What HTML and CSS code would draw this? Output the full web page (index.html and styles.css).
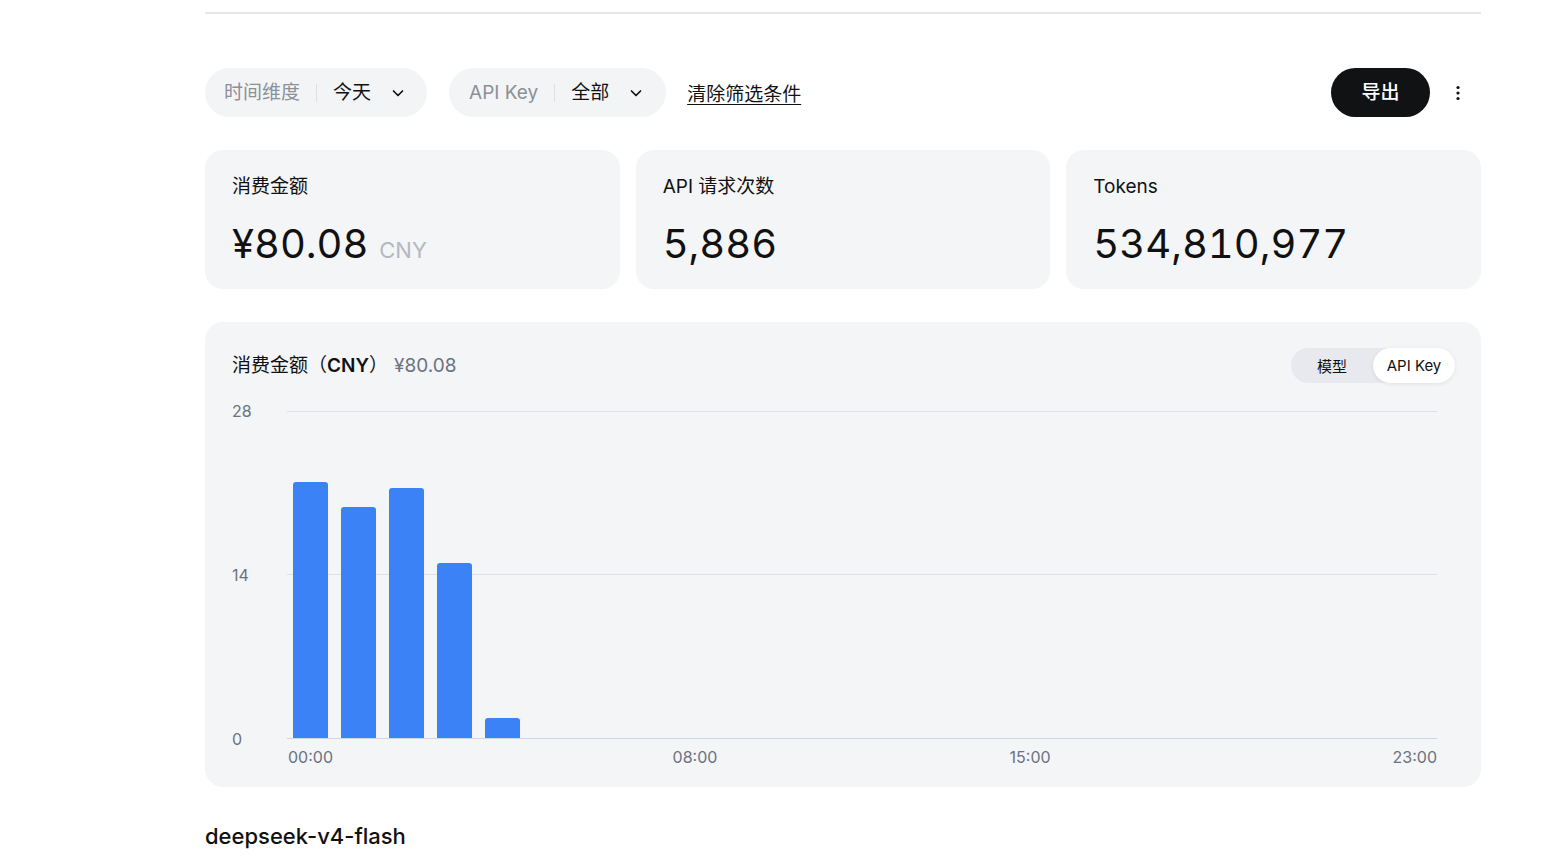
FILE: index.html
```html
<!DOCTYPE html>
<html lang="zh-CN">
<head>
  <meta charset="UTF-8" />
  <meta name="viewport" content="width=device-width, initial-scale=1.0"/>
  <title>用量信息</title>
  <link rel="stylesheet" href="styles.css">
</head>
<body>
  <div class="page">
    <div class="topline"></div>

    <div class="filters">
      <div class="filter-left">
        <div class="pill">
          <span class="pill-label">时间维度</span>
          <span class="pill-sep"></span>
          <span class="pill-value">今天</span>
          <svg class="chevron" width="14" height="14" viewBox="0 0 14 14"><path d="M2.5 5l4.5 4.5L11.5 5" fill="none" stroke="#111" stroke-width="1.7" stroke-linecap="round" stroke-linejoin="round"/></svg>
        </div>
        <div class="pill">
          <span class="pill-label">API Key</span>
          <span class="pill-sep"></span>
          <span class="pill-value">全部</span>
          <svg class="chevron" width="14" height="14" viewBox="0 0 14 14"><path d="M2.5 5l4.5 4.5L11.5 5" fill="none" stroke="#111" stroke-width="1.7" stroke-linecap="round" stroke-linejoin="round"/></svg>
        </div>
        <a class="clear-link" href="#">清除筛选条件</a>
      </div>
      <div class="filter-right">
        <button class="export-btn">导出</button>
        <button class="more-btn">
          <svg width="4" height="16" viewBox="0 0 4 16"><circle cx="2" cy="2.5" r="1.6" fill="#111"/><circle cx="2" cy="8" r="1.6" fill="#111"/><circle cx="2" cy="13.5" r="1.6" fill="#111"/></svg>
        </button>
      </div>
    </div>

    <div class="stats">
      <div class="stat-card">
        <div class="stat-label">消费金额</div>
        <div class="stat-value">¥80.08 <span class="stat-unit">CNY</span></div>
      </div>
      <div class="stat-card">
        <div class="stat-label">API 请求次数</div>
        <div class="stat-value">5,886</div>
      </div>
      <div class="stat-card">
        <div class="stat-label">Tokens</div>
        <div class="stat-value">534,810,977</div>
      </div>
    </div>

    <div class="chart-card">
      <div class="chart-head">
        <div class="chart-title">消费金额（<span class="chart-unit">CNY</span>）<span class="chart-total">¥80.08</span></div>
        <div class="toggle">
          <span class="toggle-item">模型</span>
          <span class="toggle-item active">API Key</span>
        </div>
      </div>

      <div class="chart-body">
        <div class="y-axis">
          <span>28</span>
          <span>14</span>
          <span>0</span>
        </div>
        <div class="plot">
          <div class="slot"><div class="bar" style="height: 78.6%"></div></div>
          <div class="slot"><div class="bar" style="height: 71.0%"></div></div>
          <div class="slot"><div class="bar" style="height: 76.8%"></div></div>
          <div class="slot"><div class="bar" style="height: 53.8%"></div></div>
          <div class="slot"><div class="bar" style="height: 6.1%"></div></div>
          <div class="slot"></div>
          <div class="slot"></div>
          <div class="slot"></div>
          <div class="slot"></div>
          <div class="slot"></div>
          <div class="slot"></div>
          <div class="slot"></div>
          <div class="slot"></div>
          <div class="slot"></div>
          <div class="slot"></div>
          <div class="slot"></div>
          <div class="slot"></div>
          <div class="slot"></div>
          <div class="slot"></div>
          <div class="slot"></div>
          <div class="slot"></div>
          <div class="slot"></div>
          <div class="slot"></div>
          <div class="slot"></div>
        </div>
        <div class="x-axis">
          <span class="tick tick-start">00:00</span>
          <span class="tick"></span><span class="tick"></span><span class="tick"></span>
          <span class="tick"></span><span class="tick"></span><span class="tick"></span>
          <span class="tick"></span>
          <span class="tick tick-mid">08:00</span>
          <span class="tick"></span><span class="tick"></span><span class="tick"></span>
          <span class="tick"></span><span class="tick"></span><span class="tick"></span>
          <span class="tick tick-mid">15:00</span>
          <span class="tick"></span><span class="tick"></span><span class="tick"></span>
          <span class="tick"></span><span class="tick"></span><span class="tick"></span>
          <span class="tick"></span>
          <span class="tick tick-end">23:00</span>
        </div>
      </div>
    </div>

    <h2 class="model-title">deepseek-v4-flash</h2>
  </div>
</body>
</html>
```

FILE: styles.css
```css
    body {
      margin: 0;
      font-family: Inter, "Noto Sans CJK SC", sans-serif;
      background-color: white;
      color: #111;
    }

    .page {
      width: 1276px;
      margin-left: 205px;
    }

    .topline {
      height: 12px;
      border-bottom: 2px solid #e6e6e6;
    }

    .filters {
      display: flex;
      justify-content: space-between;
      align-items: center;
      margin-top: 54px;
      height: 49px;
    }

    .filter-left {
      display: flex;
      align-items: center;
      gap: 22px;
    }

    .pill {
      display: flex;
      align-items: center;
      height: 49px;
      padding: 0 22px 0 19px;
      background-color: #f3f4f6;
      border-radius: 25px;
      font-size: 19px;
      line-height: 24px;
    }

    .pill + .pill {
      padding-left: 20px;
      padding-right: 23px;
    }

    .pill-label {
      color: #8b8f97;
    }

    .pill-sep {
      width: 1px;
      height: 18px;
      background-color: #dcdfe4;
      margin: 0 16px;
    }

    .pill-value {
      color: #111;
    }

    .chevron {
      margin-left: 20px;
    }

    .clear-link {
      margin-left: -1px;
      color: #111;
      font-size: 19px;
      text-decoration: underline;
      text-underline-offset: 3px;
    }

    .filter-right {
      display: flex;
      align-items: center;
      gap: 5px;
    }

    .export-btn {
      width: 99px;
      height: 49px;
      border: none;
      border-radius: 25px;
      background-color: #111214;
      color: white;
      font-family: inherit;
      font-size: 19px;
      line-height: 22px;
      font-weight: 500;
      cursor: pointer;
    }

    .more-btn {
      width: 46px;
      height: 46px;
      border: none;
      background: none;
      display: flex;
      align-items: center;
      justify-content: center;
      cursor: pointer;
    }

    .stats {
      display: flex;
      gap: 16px;
      margin-top: 33px;
    }

    .stat-card {
      flex: 1;
      background-color: #f4f5f7;
      border-radius: 18px;
      padding: 25px 27px 21px;
    }

    .stat-label {
      font-size: 19px;
      line-height: 24px;
    }

    .stat-value {
      margin-top: 21px;
      font-size: 40px;
      line-height: 48px;
      height: 48px;
      font-weight: 400;
      font-variant-numeric: tabular-nums;
    }

    .stat-unit {
      font-size: 22px;
      color: #b4b8bf;
    }

    .chart-card {
      margin-top: 33px;
      background-color: #f4f5f7;
      border-radius: 18px;
      padding: 26px 26px 19px 27px;
    }

    .chart-head {
      display: flex;
      justify-content: space-between;
      align-items: center;
    }

    .chart-title {
      font-size: 19px;
      line-height: 24px;
      padding-top: 1px;
    }

    .chart-unit {
      font-weight: 600;
    }

    .chart-total {
      margin-left: 6px;
      color: #6b7280;
    }

    .toggle {
      display: flex;
      background-color: #e7e9ee;
      border-radius: 18px;
      height: 35px;
    }

    .toggle-item {
      width: 82px;
      display: flex;
      align-items: center;
      justify-content: center;
      font-size: 15px;
      border-radius: 18px;
    }

    .toggle-item.active {
      background-color: white;
      box-shadow: 0 1px 4px rgba(0,0,0,0.08);
    }

    .chart-body {
      display: grid;
      grid-template-columns: 55px 1fr;
      margin-top: 28px;
      margin-right: 18px;
    }

    .y-axis {
      display: flex;
      flex-direction: column;
      justify-content: space-between;
      margin: -8px 0;
      font-size: 16px;
      line-height: 16px;
      color: #6b7280;
    }

    .plot {
      display: flex;
      align-items: flex-end;
      height: 326px;
      border-top: 1px solid #dde1e8;
      border-bottom: 1px solid #cfd5e1;
      background: linear-gradient(to bottom, transparent calc(50% - 1px), #dde1e8 calc(50% - 1px), #dde1e8 50%, transparent 50%);
    }

    .slot {
      flex: 1;
      height: 100%;
      display: flex;
      align-items: flex-end;
      justify-content: center;
    }

    .bar {
      width: 73%;
      background-color: #3b82f6;
      border-radius: 3px 3px 0 0;
    }

    .x-axis {
      grid-column: 2;
      display: flex;
      margin-top: 7px;
      font-size: 16px;
      line-height: 22px;
      color: #6b7280;
    }

    .tick {
      flex: 1;
      white-space: nowrap;
      display: flex;
      justify-content: center;
    }

    .tick-start {
      justify-content: flex-start;
      padding-left: 1px;
    }

    .tick-end {
      justify-content: flex-end;
    }

    .model-title {
      margin: 35px 0 0;
      font-size: 22px;
      line-height: 28px;
      font-weight: 500;
    }
```
